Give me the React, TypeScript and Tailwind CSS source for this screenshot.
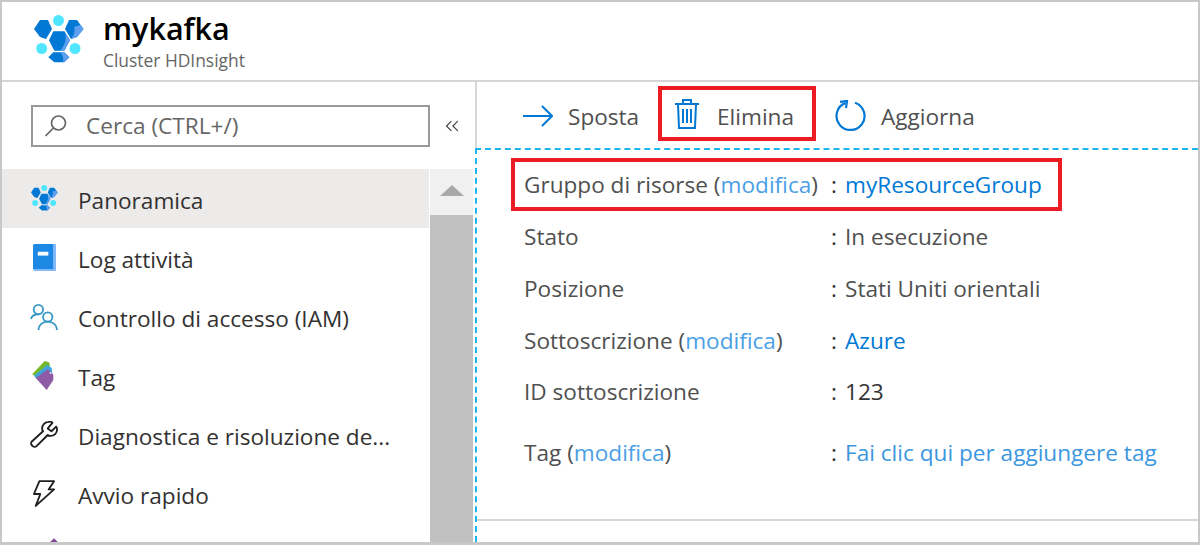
import { ChevronsLeft } from "lucide-react"

function KafkaLogo({ className }: { className: string }) {
  return (
    <svg viewBox="0 0 50 50" className={className}>
      <circle cx="24.5" cy="5.5" r="5.5" fill="#50e6ff" />
      <circle cx="7.7" cy="33.5" r="5.5" fill="#50e6ff" />
      <circle cx="41" cy="33.5" r="5.5" fill="#50e6ff" />
      <path d="M6 5h8l4 9-6 10-6-2-6-8z" fill="#0078d4" />
      <path d="M35 5h8l6.5 9-6.5 8-6 2-6-10z" fill="#0078d4" />
      <path d="M40 12c1 3 1 7-3 12l6-2 6.5-8-3-4z" fill="#5ea0ef" />
      <path d="M19.3 16.3h11l5.7 9-5.7 10.4h-10L15 25.3z" fill="#0078d4" />
      <path d="M31 17l5 8.300-5.700 10.400H26c5-5 7-12 5-18.700z" fill="#5ea0ef" />
      <path d="M19.300 37.300h11l5 5-5 5h-10l-6-5z" fill="#0078d4" />
      <path d="M26 37.300h4.300l5 5-5 5H29c1-4 0-7-3-10z" fill="#5ea0ef" />
    </svg>
  )
}

function BookIcon() {
  return (
    <svg viewBox="0 0 24 28" className="w-[23px] h-[27px]">
      <path d="M2 0h21a1 1 0 0 1 1 1v26a1 1 0 0 1-1 1H2a2 2 0 0 1-2-2V2a2 2 0 0 1 2-2z" fill="#83b9f9" />
      <path d="M2 0h19v26H0V2a2 2 0 0 1 2-2z" fill="#1e88e5" />
      <rect x="5" y="8" width="11" height="4" fill="#ffffff" />
    </svg>
  )
}

function UsersIcon() {
  return (
    <svg viewBox="0 0 30 30" fill="none" stroke="#3999c6" strokeWidth="2" className="w-[28px] h-[28px]">
      <circle cx="9" cy="7" r="5" />
      <path d="M1 17c1-3 4-5 8-5" />
      <circle cx="19" cy="15" r="5" />
      <path d="M9 29c0-5 4-9 10-9s10 4 10 9" />
    </svg>
  )
}

function TagIcon() {
  return (
    <svg viewBox="0 0 24 29" className="w-[24px] h-[29px]">
      <path d="M0.300 13L12.700 0l4.300 1.300 1 3.400L2 14.700z" fill="#76b82a" />
      <path d="M2 14.700L15.300 3.700 19.700 7l0.600 5.300L3.700 17z" fill="#3ea6dc" />
      <path d="M3.700 17L16 8l5.300 5.700V19L14.700 29z" fill="#8e5ba6" />
      <circle cx="18.500" cy="12" r="0.900" fill="#dff3fb" />
    </svg>
  )
}

function WrenchIcon() {
  return (
    <svg viewBox="0 0 30 30" fill="none" stroke="#1f1f1f" strokeWidth="2" strokeLinejoin="round" className="w-[28px] h-[28px]">
      <path d="M20 1c-4 0-7 3-7 7 0 1 0 2 1 3L2 22c-1 1-1 3 0 4l1 1c1 1 3 1 4 0L19 15c1 1 2 1 3 1 4 0 7-3 7-7 0-1 0-2-1-3l-5 5-4-3 5-6c-1-1-3-2-4-2z" />
    </svg>
  )
}

function BoltIcon() {
  return (
    <svg viewBox="0 0 24 30" fill="none" stroke="#1f1f1f" strokeWidth="2" strokeLinejoin="round" className="w-[22px] h-[28px]">
      <path d="M7 1h16l-6 9h6L3 28l5-13H1z" />
    </svg>
  )
}

function SearchIcon() {
  return (
    <svg viewBox="0 0 24 24" fill="none" stroke="#666666" strokeWidth="1.7" className="w-[24px] h-[24px]">
      <circle cx="14.500" cy="9" r="7" />
      <path d="M9.500 14L1.500 22" />
    </svg>
  )
}

function ArrowIcon() {
  return (
    <svg viewBox="0 0 30 24" fill="none" stroke="#0078d4" strokeWidth="2" className="w-[30px] h-[24px]">
      <path d="M0 12h29M19 2l10 10-10 10" />
    </svg>
  )
}

function TrashIcon() {
  return (
    <svg viewBox="0 0 24 30" fill="none" stroke="#0078d4" strokeWidth="2" className="w-[24px] h-[30px]">
      <path d="M0 5h24M8 5V1h8v4M3 5l1 24h16l1-24M8 10v14M12 10v14M16 10v14" />
    </svg>
  )
}

function RefreshIcon() {
  return (
    <svg viewBox="0 0 32 32" fill="none" stroke="#0078d4" strokeWidth="2.200" className="w-[32px] h-[32px]">
      <path d="M20 2.700A14 14 0 1 1 10.500 2.900" />
      <path d="M5 1.800L12 1l-1 7" />
    </svg>
  )
}

const menu = [
  { label: "Panoramica", icon: <KafkaLogo className="w-[27px] h-[27px]" />, active: true },
  { label: "Log attività", icon: <BookIcon /> },
  { label: "Controllo di accesso (IAM)", icon: <UsersIcon /> },
  { label: "Tag", icon: <TagIcon /> },
  { label: "Diagnostica e risoluzione de...", icon: <WrenchIcon /> },
  { label: "Avvio rapido", icon: <BoltIcon /> },
]

function Edit() {
  return <span className="text-[#4a9fe6]">modifica</span>
}

function Row({ label, children, className }: { label: React.ReactNode; children: React.ReactNode; className: string }) {
  return (
    <div className={`flex items-center pl-[47px] ${className}`}>
      <div className="w-[307px] text-[#505050]">{label}</div>
      <div className="w-[14px] text-[#333333]">:</div>
      <div>{children}</div>
    </div>
  )
}

export default function App() {
  return (
    <div
      className="w-[1200px] h-[545px] border-2 border-b-[3px] border-[#c8c8c8] bg-white flex flex-col overflow-hidden text-[22.6px]"
      style={{ fontFamily: '"Open Sans", sans-serif' }}
    >
      {/* Header */}
      <header className="h-[80px] shrink-0 border-b-2 border-[#d6d6d6] flex items-start pl-[32px] pt-[12px]">
        <KafkaLogo className="w-[50px] h-[50px] mt-[1px]" />
        <div className="ml-[19px] -mt-[3px]">
          <h1 className="text-[30.5px] leading-[34px] font-semibold text-black">mykafka</h1>
          <p className="mt-[2px] text-[17.4px] leading-[26px] text-[#666666]">Cluster HDInsight</p>
        </div>
      </header>

      <div className="flex-1 flex min-h-0">
        {/* Sidebar */}
        <aside className="w-[473px] shrink-0 flex flex-col">
          <div className="h-[87px] shrink-0 flex items-start pt-[23px] pl-[29px]">
            <div className="w-[399px] h-[42px] border-2 border-[#999999] flex items-center pl-[11px]">
              <SearchIcon />
              <span className="ml-[18px] text-[#666666]">Cerca (CTRL+/)</span>
            </div>
            <ChevronsLeft className="w-[22px] h-[22px] ml-[11px] mt-[10px] text-[#444444]" strokeWidth={1.25} />
          </div>
          <div className="flex-1 flex min-h-0">
            <nav className="w-[427px] shrink-0 overflow-hidden">
              {menu.map((item) => (
                <div
                  key={item.label}
                  className={`h-[59px] flex items-center text-[#323130] ${item.active ? "bg-[#ecebea]" : ""}`}
                >
                  <div className="w-[76px] flex justify-center pl-[8px] shrink-0">{item.icon}</div>
                  <span className="pt-[5px]">{item.label}</span>
                </div>
              ))}
              <div className="pl-[43px] pt-[19px]">
                <div className="w-[18px] h-[18px] bg-[#804998] rotate-45" />
              </div>
            </nav>
            <div className="w-[43px] ml-[1px] flex flex-col">
              <div className="h-[46px] bg-[#f0f0f0] flex items-center justify-center pb-[3px]">
                <div className="w-0 h-0 border-x-[12px] border-x-transparent border-b-[11px] border-b-[#a8a8a8]" />
              </div>
              <div className="flex-1 bg-[#c1c1c1]" />
            </div>
          </div>
        </aside>

        {/* Main content */}
        <main className="flex-1 min-w-0 flex flex-col">
          <div className="h-[66px] shrink-0 border-l-2 border-[#d6d6d6] flex items-center pl-[46px] pt-[3px] text-[#505050]">
            <div className="flex items-center w-[135px]">
              <ArrowIcon />
              <span className="ml-[15px]">Sposta</span>
            </div>
            <div className="w-[158px] h-[55px] -mt-[6px] border-4 border-[#ec1c24] flex items-center pl-[13px]">
              <TrashIcon />
              <span className="ml-[18px] pt-[6px]">Elimina</span>
            </div>
            <div className="flex items-center ml-[19px]">
              <RefreshIcon />
              <span className="ml-[14px]">Aggiorna</span>
            </div>
          </div>
          <div className="flex-1 border-t-2 border-l-2 border-dashed border-[#1cb5ec] min-h-0">
            <div className="w-[551px] h-[53px] ml-[34px] mt-[8px] border-4 border-[#ec1c24] flex items-center pl-[9px]">
              <div className="w-[307px] text-[#505050]">
                Gruppo di risorse (<Edit />)
              </div>
              <div className="w-[14px] text-[#333333]">:</div>
              <span className="text-[#0078d4]">myResourceGroup</span>
            </div>
            <Row label="Stato" className="h-[52px]">
              <span className="text-[#505050]">In esecuzione</span>
            </Row>
            <Row label="Posizione" className="h-[52px]">
              <span className="text-[#505050]">Stati Uniti orientali</span>
            </Row>
            <Row label={<>Sottoscrizione (<Edit />)</>} className="h-[52px]">
              <span className="text-[#0078d4]">Azure</span>
            </Row>
            <Row label="ID sottoscrizione" className="h-[50px]">
              <span className="text-[#333333]">123</span>
            </Row>
            <Row label={<>Tag (<Edit />)</>} className="h-[72px]">
              <span className="text-[#3b97e0]">Fai clic qui per aggiungere tag</span>
            </Row>
            <div className="mt-[30px] border-t-2 border-[#d6d6d6]" />
          </div>
        </main>
      </div>
    </div>
  )
}
